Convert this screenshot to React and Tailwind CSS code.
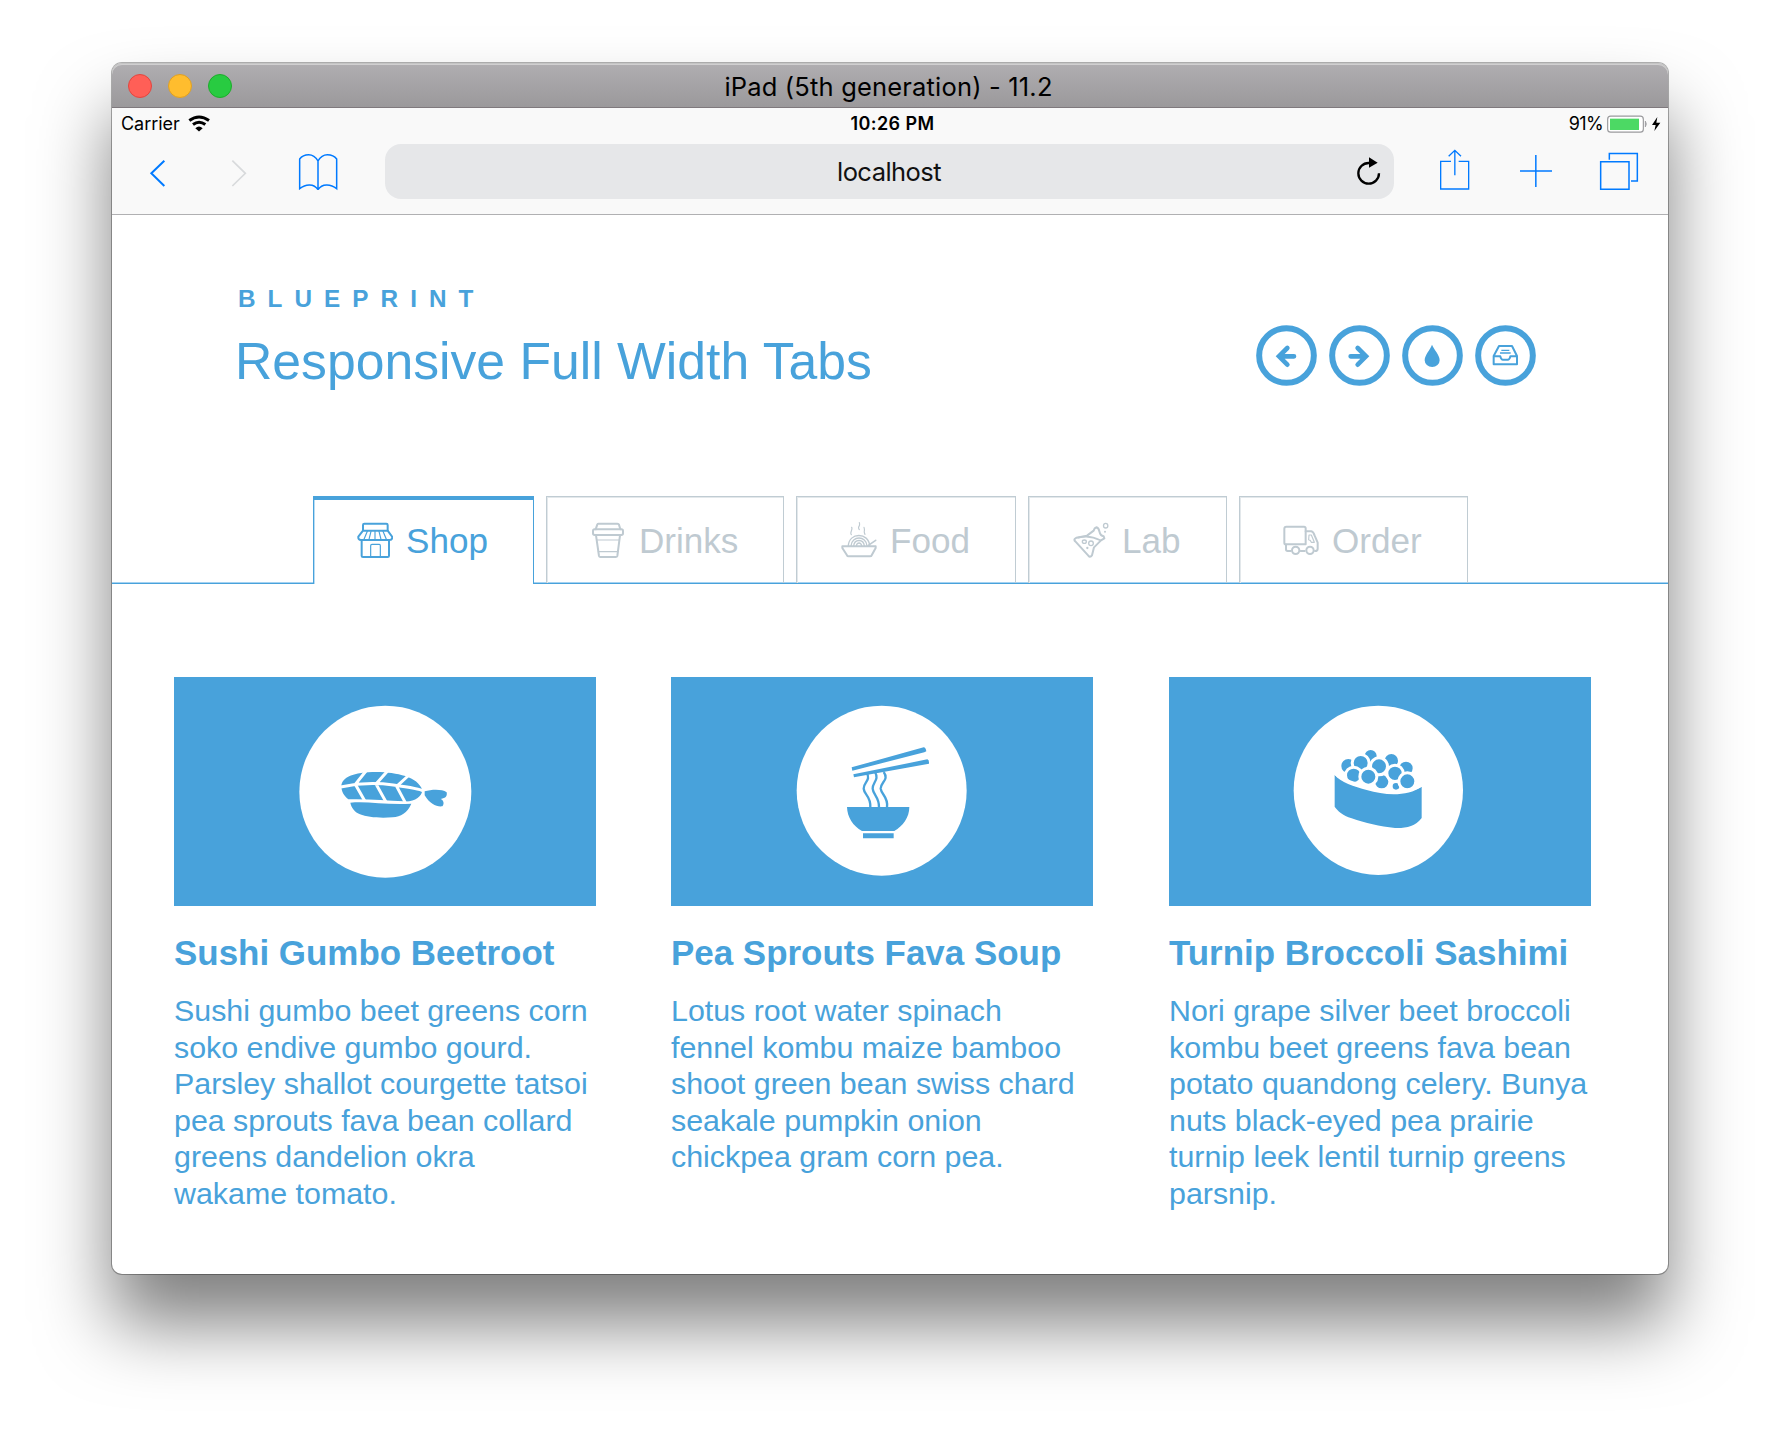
const BLUE = '#48a2db';

function WindowButtons() {
  return (
    <div className="absolute left-4 top-[11px] flex gap-4">
      <span className="size-6 rounded-full border border-[#e2463f] bg-[#ff5f57]" />
      <span className="size-6 rounded-full border border-[#dfa023] bg-[#ffbd2e]" />
      <span className="size-6 rounded-full border border-[#1dad2b] bg-[#28cb41]" />
    </div>
  );
}

function TitleBar() {
  return (
    <div className="relative flex h-[45px] items-center justify-center rounded-t-[10px] border-b border-[#7f797d] bg-linear-to-b from-[#b0aeb1] to-[#9b999b] shadow-[inset_0_1px_0_#c4c4c4,inset_0_2px_0_#d0cfd0]">
      <WindowButtons />
      <span className="-ml-[3px] pt-[3px] text-[25.5px] leading-8 tracking-[0.18px] text-black">iPad (5th generation) - 11.2</span>
    </div>
  );
}

function StatusBar() {
  return (
    <div className="grid h-[36px] grid-cols-3 items-center pl-[9px] pr-[7px] text-[18px] text-black">
      <div className="flex items-center gap-[8px] pb-[5px]">
        <span className="tracking-[-0.05px]">Carrier</span>
        <svg width="22" height="17" viewBox="265 180 66 50" fill="none" stroke="#000" strokeWidth="9">
          <path d="M269 196Q298 175 328 196" />
          <path d="M280 208Q298 194 317 208" />
          <path d="M287 219Q298 209 309 219L298 229Z" fill="#000" stroke="none" />
        </svg>
      </div>
      <div className="pb-[5px] pl-[3px] text-center font-semibold tracking-[0.4px]">10:26 PM</div>
      <div className="flex items-center justify-end pb-[5px]">
        <span className="mr-[4px] tracking-[-0.6px]">91%</span>
        <svg width="54" height="18" viewBox="1101 178 162 54">
          <rect x="1103" y="181.500" width="107" height="48" rx="9" fill="#fff" stroke="#9a9a9d" strokeWidth="3.500" />
          <rect x="1110" y="189" width="87" height="34" fill="#4cd964" />
          <path d="M1216 196Q1222 205 1216 214Z" fill="#9a9a9d" stroke="#9a9a9d" strokeWidth="2" />
          <path d="M1252 184L1236 208H1247L1243 226L1261 201H1249Z" fill="#000" />
        </svg>
      </div>
    </div>
  );
}

function Toolbar() {
  return (
    <div className="flex h-[70px] items-start text-[#007aff]">
      <svg className="ml-[37px] mt-[15px]" width="18" height="30" viewBox="147 312 54 90" fill="none" stroke="currentColor" strokeWidth="6">
        <path d="M193 317L154 355L193 393" />
      </svg>
      <svg className="ml-[63px] mt-[15px]" width="18" height="30" viewBox="390 312 54 90" fill="none" stroke="#d8dadc" strokeWidth="5">
        <path d="M397 317L436 355L397 393" />
      </svg>
      <svg className="ml-[50px] mt-[9px]" width="42" height="39" viewBox="594 294 126 117" fill="none" stroke="currentColor" strokeWidth="4.500">
        <path d="M654 318V405M654 318C646 304 636 299 626 299C614 299 604 305 599 312V401C617 386 642 385 654 404M654 318C662 304 672 299 682 299C694 299 705 305 710 312V401C692 386 666 385 654 404" />
      </svg>
      <div className="ml-[45px] flex h-[55px] w-[1009px] items-center rounded-[16px] bg-[#e6e7e9]">
        <span className="ml-[38px] flex-1 pt-[2px] text-center text-[25.5px] tracking-[-0.55px] text-[#111]">localhost</span>
        <svg className="mr-[11px] -mt-[2px]" width="28" height="30" viewBox="344 305 84 90" fill="none" stroke="#000" strokeWidth="7">
          <path d="M416 357A31 31 0 1 1 385 326H391" />
          <path d="M386 309L412 325L386 340Z" fill="#000" stroke="none" />
        </svg>
      </div>
      <svg className="ml-[44px] mt-[4px]" width="34" height="44" viewBox="593 280 102 132" fill="none" stroke="currentColor" strokeWidth="4">
        <path d="M632 320H601V403H685V320H655M643.500 362V289M625 305L643.500 287L662 305" />
      </svg>
      <svg className="ml-[46px] mt-[9px]" width="36" height="36" viewBox="834 294 108 108" fill="none" stroke="currentColor" strokeWidth="4.500">
        <path d="M840 348H936M887.500 300V396" />
      </svg>
      <svg className="ml-[44px] mt-[7px]" width="44" height="42" viewBox="1074 288 132 126" fill="none" stroke="currentColor" strokeWidth="4.500">
        <path d="M1082 320H1167V403H1082ZM1108 314V295.500H1192V378H1173" />
      </svg>
    </div>
  );
}

function RoundIcons() {
  return (
    <nav className="flex gap-[12px] pt-[41px]" style={{ color: BLUE }}>
      <svg width="61" height="61" viewBox="47 45 183 183" fill="none" stroke="currentColor">
        <circle cx="138.500" cy="136.500" r="82" strokeWidth="18" />
        <path d="M141 114L116 139L141 164M120 139H161" strokeWidth="14" strokeLinecap="round" strokeLinejoin="miter" />
      </svg>
      <svg width="61" height="61" viewBox="265 45 183 183" fill="none" stroke="currentColor">
        <circle cx="356.500" cy="136.500" r="82" strokeWidth="18" />
        <path d="M351 114L376 139L351 164M372 139H330" strokeWidth="14" strokeLinecap="round" strokeLinejoin="miter" />
      </svg>
      <svg width="61" height="61" viewBox="484 45 183 183" fill="none" stroke="currentColor">
        <circle cx="575.500" cy="136.500" r="82" strokeWidth="18" />
        <path d="M574 104C581 121 597 134 597 151A22.500 20 0 0 1 552 151C552 134 568 121 574 104Z" fill="currentColor" stroke="none" />
      </svg>
      <svg width="61" height="61" viewBox="702 45 183 183" fill="none" stroke="currentColor">
        <circle cx="793.500" cy="136.500" r="82" strokeWidth="18" />
        <path d="M774 108H813L828 138V163H758V138ZM759 139H778Q780 149 786 149H800Q806 149 808 139H827" strokeWidth="6" strokeLinejoin="round" />
        <path d="M781 121H805M777 129H809" strokeWidth="4" />
      </svg>
    </nav>
  );
}

const iconProps = { width: 36, height: 36, fill: 'none', stroke: 'currentColor', strokeWidth: 6, strokeLinejoin: 'round', strokeLinecap: 'round' };

function ShopIcon() {
  return (
    <svg {...iconProps} viewBox="170 110 108 108">
      <path d="M188 135V119Q188 115 192 115H258Q262 115 262 119V135" />
      <path d="M188 136L174 154Q173 164 182 164H268Q276 164 276 155L262 136Z" />
      <path d="M184 165V212Q184 215 188 215H262Q266 215 266 211V165" />
      <path d="M211 214V181Q211 177 215 177H237Q240 177 240 181V214M201 138L191 162M212 138L206 162M224 138V162M236 138L242 162M248 138L258 162" strokeWidth="3.500" />
    </svg>
  );
}

function DrinksIcon() {
  return (
    <svg {...iconProps} viewBox="871 110 108 108">
      <path d="M888 132L893 117Q894 115 897 115H953Q957 115 958 118L962 132" />
      <rect x="880" y="132" width="90" height="17" rx="5" />
      <path d="M889 150L898 212Q899 215 902 215H948Q952 215 953 212L961 150" />
      <path d="M892 164H958M896 199H954" strokeWidth="3.500" />
    </svg>
  );
}

function FoodIcon() {
  return (
    <svg {...iconProps} viewBox="184 108 108 108">
      <path d="M188 181H288V186L276 208Q275 211 271 211H207Q203 211 202 208L188 186Z" />
      <path d="M206 180C207 138 268 138 270 180M214 180C216 148 260 148 262 180M222 180C224 158 252 158 254 180M230 180C232 168 244 168 246 180" strokeWidth="4" />
      <path d="M266 178L288 163" strokeWidth="5" />
      <path d="M216 124Q218 127 215 135T215 146M239 110Q241 116 238 121T239 131M253 124Q255 130 254 135T256 145" strokeWidth="3.500" />
    </svg>
  );
}

function LabIcon() {
  return (
    <svg {...iconProps} viewBox="880 110 108 108">
      <path d="M885 161Q883 165 887 168L926 211Q930 217 934 213Q938 210 938 206L943 186L964 165L974 159L972 153Q962 152 959 138Q957 128 950 126L945 129L942 136L922 151L890 157Z" />
      <path d="M896 157Q930 148 962 165" strokeWidth="5" />
      <ellipse cx="914" cy="169" rx="6" ry="5" strokeWidth="4" />
      <ellipse cx="934" cy="174" rx="7" ry="7" strokeWidth="4" />
      <circle cx="923" cy="188" r="3.500" fill="currentColor" stroke="none" />
      <ellipse cx="978" cy="121" rx="6.500" ry="7" strokeWidth="4" />
      <circle cx="976" cy="139" r="3" fill="currentColor" stroke="none" />
    </svg>
  );
}

function OrderIcon() {
  return (
    <svg {...iconProps} viewBox="1509 110 108 108">
      <path d="M1519 124H1572Q1577 124 1577 129V177H1517Q1513 177 1513 172V130Q1513 124 1519 124Z" />
      <path d="M1577 138H1594Q1600 139 1604 151L1613 172V190Q1613 197 1605 197M1518 178V192Q1518 197 1523 197H1532M1562 197H1574" />
      <circle cx="1547" cy="195" r="11" />
      <circle cx="1590" cy="195" r="11" />
      <path d="M1587 149H1594L1603 171H1594Q1592 164 1586 163Z" strokeWidth="3.500" />
    </svg>
  );
}

const tabs = [
  { label: 'Shop', Icon: ShopIcon, box: 'w-[221px] pl-[43px]', active: true },
  { label: 'Drinks', Icon: DrinksIcon, box: 'w-[238px] ml-[12px] pl-[43px]' },
  { label: 'Food', Icon: FoodIcon, box: 'w-[220px] ml-[12px] pl-[44px]' },
  { label: 'Lab', Icon: LabIcon, box: 'w-[199px] ml-[12px] pl-[44px]' },
  { label: 'Order', Icon: OrderIcon, box: 'w-[229px] ml-[12px] pl-[43px]' },
];

function Tabs() {
  return (
    <div className="flex h-[88px] w-full border-b border-[#48a2db] pl-[201px] shadow-[inset_0_-1px_0_#a5d2f1]">
      {tabs.map(({ label, Icon, box, active }) => (
        <div
          key={label}
          className={
            (active
              ? 'h-[88px] border-x border-t-4 border-[#48a2db] bg-white text-[#48a2db] shadow-[inset_1px_0_0_#b9dcf3] '
              : 'h-[87px] border-x border-t border-[#c0ccd3] text-[#bfcad1] shadow-[inset_1px_1px_0_#e3e8eb] ') +
            'flex shrink-0 items-center ' +
            box
          }
        >
          <span className={active ? '-mt-[5px]' : '-mt-[1px]'}>
            <Icon />
          </span>
          <span className={'ml-[13px] text-[35.1px] leading-[40px] ' + (active ? 'mt-[-3px]' : 'mt-[1px]')}>{label}</span>
        </div>
      ))}
    </div>
  );
}

function SushiPicture() {
  return (
    <svg className="block w-full" height="229" viewBox="-318 -39 1266 687" preserveAspectRatio="none" fill={BLUE}>
      <rect x="-318" y="-39" width="1266" height="687" />
      <circle cx="316" cy="305" r="258" fill="#fff" />
      <path d="M184 288C186 262 218 246 290 246C350 247 414 260 427 300C426 320 404 336 372 334C320 332 260 326 205 328C192 318 184 304 184 288Z" />
      <path d="M182 291Q260 274 340 285T430 303M258 243L226 283L254 332M322 244L288 282L318 336M384 258L350 289L376 338" fill="none" stroke="#fff" strokeWidth="9" />
      <path d="M211 338C260 332 320 346 394 341C382 370 362 379 338 382C300 385 262 382 240 373C222 365 214 352 211 338Z" />
      <path d="M434 304C456 298 486 297 500 307C502 318 498 325 482 327C491 330 494 342 487 349C470 351 450 343 434 316Z" />
    </svg>
  );
}

function SoupPicture() {
  return (
    <svg className="block w-full" height="229" viewBox="-326 -39 1266 687" preserveAspectRatio="none" fill={BLUE}>
      <rect x="-326" y="-39" width="1266" height="687" />
      <circle cx="306" cy="302" r="255" fill="#fff" />
      <path d="M216 232L432 172Q438 172 440 184L434 187L218 242ZM221 253L443 208Q449 210 448 221L223 262Z" />
      <path d="M261 248C275 272 251 276 252 296C253 314 274 318 272 352M286 246C300 270 278 276 279 296C280 314 299 322 298 352M312 246C330 270 302 276 303 296C305 314 327 322 322 352" fill="none" stroke={BLUE} strokeWidth="7" />
      <path d="M202 351H389C389 382 370 408 344 423H247C220 408 203 382 202 351ZM250 430H342V445H250Z" />
    </svg>
  );
}

const roe = [
  [272, 198, 18],
  [205, 228, 21],
  [334, 212, 20],
  [378, 235, 20],
  [348, 289, 10],
  [305, 275, 20],
  [297, 229, 21],
  [242, 219, 21],
  [221, 256, 20],
  [345, 250, 20],
  [265, 260, 21],
  [382, 274, 21],
];

function RoePicture() {
  return (
    <svg className="block w-full" height="229" viewBox="-333 -39 1266 687" preserveAspectRatio="none" fill={BLUE}>
      <rect x="-333" y="-39" width="1266" height="687" />
      <circle cx="295" cy="301" r="254" fill="#fff" />
      {roe.map(([x, y, r]) => (
        <circle key={x} cx={x} cy={y} r={r + 4.5} stroke="#fff" strokeWidth="9" />
      ))}
      <path d="M164 254C180 276 224 290 260 300C320 318 385 318 425 290V384C405 410 378 415 345 414C300 410 255 399 215 385C188 376 172 362 164 350Z" />
      <path d="M162 247C180 268 224 282 262 293C320 310 385 310 427 284" fill="none" stroke="#fff" strokeWidth="9" />
    </svg>
  );
}

const cards = [
  {
    title: 'Sushi Gumbo Beetroot',
    Picture: SushiPicture,
    lines: ['Sushi gumbo beet greens corn', 'soko endive gumbo gourd.', 'Parsley shallot courgette tatsoi', 'pea sprouts fava bean collard', 'greens dandelion okra', 'wakame tomato.'],
  },
  {
    title: 'Pea Sprouts Fava Soup',
    Picture: SoupPicture,
    lines: ['Lotus root water spinach', 'fennel kombu maize bamboo', 'shoot green bean swiss chard', 'seakale pumpkin onion', 'chickpea gram corn pea.'],
  },
  {
    title: 'Turnip Broccoli Sashimi',
    Picture: RoePicture,
    lines: ['Nori grape silver beet broccoli', 'kombu beet greens fava bean', 'potato quandong celery. Bunya', 'nuts black-eyed pea prairie', 'turnip leek lentil turnip greens', 'parsnip.'],
  },
];

function Card({ title, Picture, lines }) {
  return (
    <article>
      <Picture />
      <h2 className="mt-[27px] whitespace-nowrap text-[34.950px] font-bold leading-[40px]">{title}</h2>
      <p className="mt-[19px] whitespace-nowrap text-[30.38px] leading-[36.500px]">
        {lines.map((line) => (
          <span key={line} className="block">{line}</span>
        ))}
      </p>
    </article>
  );
}

export default function App() {
  return (
    <div className="h-[1434px] w-[1780px] overflow-hidden bg-white pl-[112px] pt-[63px]">
      <div className="h-[1211px] w-[1556px] rounded-[10px] bg-white font-['Inter',sans-serif] shadow-[0_0_0_1px_rgba(0,0,0,0.3),0_50px_72px_rgba(0,0,0,0.5)]">
        <TitleBar />
        <div className="h-[107px] border-b border-[#b0b0b2] bg-[#f9f9f9]">
          <StatusBar />
          <Toolbar />
        </div>
        <main className="font-['Liberation_Sans',Arial,sans-serif] text-[#48a2db]">
          <header className="flex justify-between pl-[123px] pr-[132px] pt-[69px]">
            <div>
              <div className="pl-[3px] text-[24.300px] font-bold leading-[30px] tracking-[12.050px]">BLUEPRINT</div>
              <h1 className="mt-[17px] whitespace-nowrap text-[51.700px] leading-[60px]">Responsive Full Width Tabs</h1>
            </div>
            <RoundIcons />
          </header>
          <div className="mt-[105px]">
            <Tabs />
          </div>
          <section className="grid grid-cols-[422px_422px_422px] gap-x-[75px] pl-[62px] pt-[93px]">
            {cards.map((card, i) => (
              <div key={card.title} className={i === 2 ? 'ml-px -mr-px' : ''}>
                <Card {...card} />
              </div>
            ))}
          </section>
        </main>
      </div>
    </div>
  );
}
